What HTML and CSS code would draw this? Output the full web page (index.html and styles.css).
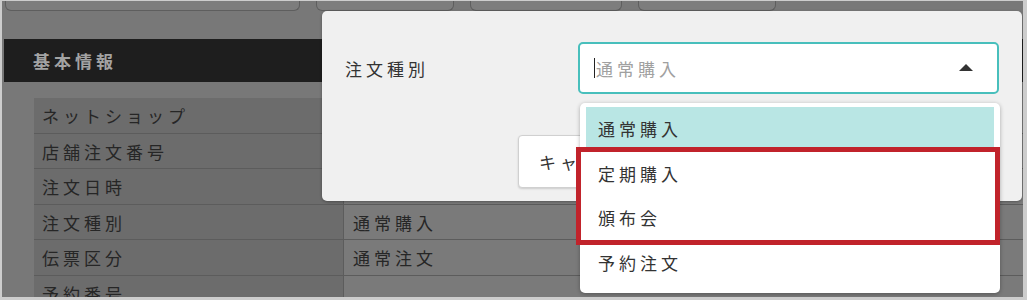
FILE: index.html
```html
<!DOCTYPE html>
<html lang="ja">
<head>
<meta charset="utf-8">
<link rel="stylesheet" href="styles.css">
</head>
<body>
<div class="screen">
  <div class="tabs">
    <div class="tab t1"></div>
    <div class="tab t2"></div>
    <div class="tab t3"></div>
    <div class="tab t4"></div>
  </div>
  <div class="section-header">基本情報</div>
  <div class="info-table">
    <div class="row"><div class="label">ネットショップ</div><div class="value"></div></div>
    <div class="row"><div class="label">店舗注文番号</div><div class="value"></div></div>
    <div class="row"><div class="label">注文日時</div><div class="value"></div></div>
    <div class="row"><div class="label">注文種別</div><div class="value">通常購入</div></div>
    <div class="row"><div class="label">伝票区分</div><div class="value">通常注文</div></div>
    <div class="row"><div class="label">予約番号</div><div class="value"></div></div>
  </div>

  <div class="modal">
    <div class="modal-row">
      <div class="modal-label">注文種別</div>
      <div class="select">
        <span class="caret"></span><span class="placeholder">通常購入</span>
        <span class="arrow"></span>
      </div>
    </div>
    <div class="modal-actions">
      <button class="btn">キャンセル</button>
    </div>
  </div>

  <div class="dropdown">
    <div class="item active">通常購入</div>
    <div class="item">定期購入</div>
    <div class="item">頒布会</div>
    <div class="item">予約注文</div>
  </div>
  <div class="highlight"></div>
</div>
</body>
</html>
```
FILE: styles.css
```css
html, body {
  margin: 0;
  padding: 0;
}
body {
  background: #cdcdcd;
  width: 1027px;
  height: 300px;
  overflow: hidden;
  font-family: "Noto Sans CJK JP", "Noto Sans", sans-serif;
}
.screen {
  position: relative;
  margin: 1px 0 0 2px;
  width: 1021px;
  height: 296px;
  background: #787878;
  overflow: hidden;
}
.tabs {
  display: flex;
  height: 10px;
  padding-left: 3px;
}
.tab {
  height: 9px;
  background: #7d7d7d;
  border: 1px solid #5e5e5e;
  border-top: none;
  border-radius: 0 0 6px 6px;
  margin-right: 16px;
}
.t1 { width: 293px; }
.t2 { width: 136px; }
.t3 { width: 150px; }
.t4 { width: 136px; }

.section-header {
  margin: 28px 0 0 2px;
  height: 43px;
  background: #1e1e1e;
  color: #a3a3a3;
  font-weight: bold;
  font-size: 17px;
  letter-spacing: 4px;
  line-height: 43px;
  padding-left: 29px;
}
.info-table {
  margin: 16px 0 0 32px;
}
.row {
  display: flex;
  height: 35.5px;
  border-bottom: 1px solid #5c5c5c;
  box-sizing: border-box;
}
.label {
  width: 309px;
  background: #6c6c6c;
  color: #262626;
  font-size: 17px;
  letter-spacing: 4px;
  line-height: 35px;
  padding-left: 8px;
  box-sizing: border-box;
}
.value {
  flex: 1;
  background: #7a7a7a;
  color: #262626;
  font-size: 17px;
  letter-spacing: 4px;
  line-height: 35px;
  padding-left: 9px;
  border-left: 1px solid #5c5c5c;
}

.modal {
  position: absolute;
  left: 320px;
  top: 10px;
  width: 700px;
  height: 190px;
  background: #f0f0f0;
  border-radius: 5px;
  box-shadow: 0 1px 3px rgba(0,0,0,0.3);
  box-sizing: border-box;
  padding: 31px 0 0 23px;
}
.modal-row {
  display: flex;
  align-items: center;
}
.modal-label {
  width: 233px;
  font-size: 17px;
  letter-spacing: 4px;
  color: #333;
}
.select {
  position: relative;
  display: flex;
  align-items: center;
  width: 421px;
  height: 52px;
  box-sizing: border-box;
  background: #fff;
  border: 2px solid #48bfbc;
  border-radius: 5px;
  padding-left: 14px;
}
.caret {
  width: 1px;
  height: 20px;
  background: #222;
  margin-right: 1px;
}
.placeholder {
  color: #a0a0a0;
  font-size: 17px;
  letter-spacing: 4px;
}
.arrow {
  position: absolute;
  right: 24px;
  top: 20px;
  width: 0;
  height: 0;
  border-left: 7px solid transparent;
  border-right: 7px solid transparent;
  border-bottom: 7px solid #333;
}
.modal-actions {
  margin: 41px 0 0 173px;
}
.btn {
  width: 130px;
  height: 53px;
  background: #fff;
  border: 1px solid #d0d0d0;
  border-radius: 4px;
  box-shadow: 0 1px 2px rgba(0,0,0,0.15);
  font-family: inherit;
  font-size: 17px;
  letter-spacing: 4px;
  color: #333;
  text-align: left;
  white-space: nowrap;
  padding-left: 20px;
}

.dropdown {
  position: absolute;
  left: 578px;
  top: 102px;
  width: 420px;
  height: 190px;
  background: #fff;
  border-radius: 5px;
  box-shadow: 0 1px 4px rgba(0,0,0,0.3);
  box-sizing: border-box;
  padding: 4px 6px;
}
.item {
  height: 44.5px;
  line-height: 44px;
  padding-left: 12px;
  font-size: 17px;
  letter-spacing: 4px;
  color: #333;
}
.item.active {
  background: #b9e6e4;
}
.highlight {
  position: absolute;
  left: 574px;
  top: 146px;
  width: 424px;
  height: 98px;
  box-sizing: border-box;
  border: 5px solid #c1232b;
}
```
